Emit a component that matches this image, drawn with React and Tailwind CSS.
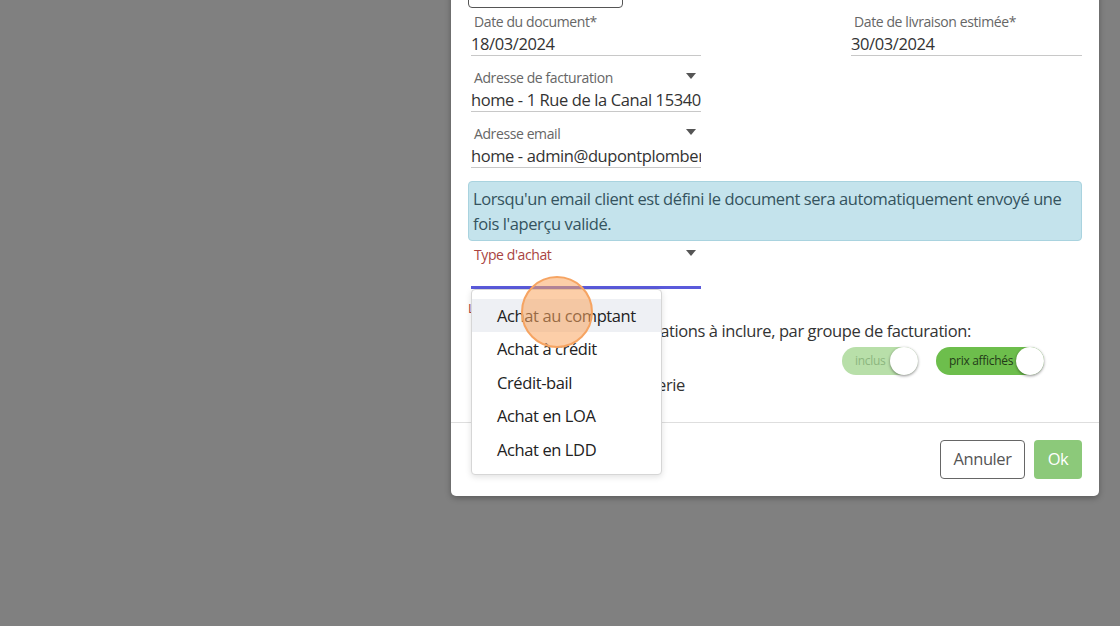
import React from "react";

const FONT = { fontFamily: '"Open Sans", "Noto Sans", sans-serif', letterSpacing: "-0.4px" };

function Field({ label, value, caret, className = "" }) {
  return (
    <div className={`relative ${className}`}>
      <div className="h-[21px] pl-[3px] text-[14px] leading-[21px] text-[#666]">{label}</div>
      <div className="h-[24px] overflow-hidden whitespace-nowrap border-b border-[#c8c8c8] text-[16.5px] leading-[24px] text-[#333]">
        {value}
      </div>
      {caret && <Caret className="absolute right-[5px] top-[6px]" />}
    </div>
  );
}

function Caret({ className = "" }) {
  return (
    <svg width="10" height="6" viewBox="0 0 10 6" className={className}>
      <path d="M0 0h10L5 6z" fill="#555" />
    </svg>
  );
}

function Toggle({ label, light }) {
  return (
    <div
      className={`flex h-[28px] items-center justify-between whitespace-nowrap rounded-full pl-[13px] ${
        light ? "w-[76px] bg-[#b8dfa9] text-[#8cb67e]" : "w-[108px] bg-[#6dbe4c] text-[#233a18]"
      }`}
    >
      <span className="text-[12px] tracking-[-0.3px]">{label}</span>
      <span className="h-[28px] w-[28px] shrink-0 rounded-full bg-white shadow-[0_1px_3px_rgba(0,0,0,0.45)]" />
    </div>
  );
}

const OPTIONS = ["Achat au comptant", "Achat à crédit", "Crédit-bail", "Achat en LOA", "Achat en LDD"];

export default function App() {
  return (
    <div className="h-[626px] w-full overflow-hidden bg-[#808080]" style={FONT}>
      <div className="ml-[451px] w-[648px] rounded-b-[5px] bg-white shadow-[0_2px_6px_rgba(0,0,0,0.3)]">
        <div className="px-[17px]">
          {/* cut-off button at the top */}
          <div className="mt-[-28px] h-[36px] w-[155px] rounded-[4px] border border-[#555]" />

          <div className="mt-[3px] flex justify-between">
            <Field className="w-[233px] pl-[3px]" label="Date du document*" value="18/03/2024" />
            <Field className="w-[234px] pl-[3px]" label="Date de livraison estimée*" value="30/03/2024" />
          </div>

          <Field
            className="mt-[11px] w-[233px] pl-[3px]"
            label="Adresse de facturation"
            value="home - 1 Rue de la Canal 15340 Paris"
            caret
          />
          <Field
            className="mt-[11px] w-[233px] pl-[3px]"
            label="Adresse email"
            value="home - admin@dupontplomberie.fr"
            caret
          />

          <div className="mt-[13px] rounded-[4px] border border-[#a9d3df] bg-[#c4e3ec] px-[4px] py-[4px] text-[16.5px] leading-[25px] text-[#34535e]">
            Lorsqu'un email client est défini le document sera automatiquement envoyé une fois l'aperçu validé.
          </div>

          {/* Type d'achat, focused with open menu */}
          <div className="relative mt-[3px] w-[233px] pl-[3px]">
            <div className="h-[21px] pl-[3px] text-[14px] leading-[21px] text-[#a94442]">Type d'achat</div>
            <div className="h-[24px] border-b-[3px] border-[#5a5adb]" />
            <Caret className="absolute right-[5px] top-[6px]" />

            <div className="absolute left-[3px] top-[45px] z-10 w-[191px] rounded-[4px] border border-[#d6d6d6] bg-white pb-[8px] pt-[9px] shadow-[0_2px_6px_rgba(0,0,0,0.12)]">
              {OPTIONS.map((o, i) => (
                <div
                  key={o}
                  className={`h-[33.4px] pl-[25px] text-[16.5px] leading-[33.4px] text-[#222] ${
                    i === 0 ? "bg-[#eef0f4]" : ""
                  }`}
                >
                  {o}
                </div>
              ))}
            </div>

            {/* click marker */}
            <div className="absolute left-[53px] top-[32px] z-20 h-[72px] w-[72px] rounded-full border-2 border-[#f6a462] bg-[#f9a561]/55" />
          </div>

          <div className="mt-[10px] text-[13px] leading-[18px] text-[#a94442]">Le type d'achat est requis</div>

          <div className="mt-[2px] pl-[4px] text-[16.5px] leading-[24px] text-[#333]">
            Sélectionnez ici les informations à inclure, par groupe de facturation:
          </div>

          <div className="mt-[4px] flex items-center justify-end gap-[18px] pr-[38px]">
            <Toggle label="inclus" light />
            <Toggle label="prix affichés" />
          </div>
          <div className="pl-[33px] text-[16.5px] leading-[20px] text-[#333]">Main d'oeuvre plomberie</div>
          <div className="h-[27px]" />
        </div>

        <div className="flex justify-end gap-[9px] border-t border-[#dedede] px-[17px] pb-[17px] pt-[17px]">
          <button className="h-[39px] w-[85px] rounded-[4px] border border-[#666] bg-white text-[16.5px] text-[#555]">
            Annuler
          </button>
          <button className="h-[39px] w-[48px] rounded-[4px] bg-[#8cc97a] text-[16.5px] text-white">Ok</button>
        </div>
      </div>
    </div>
  );
}
